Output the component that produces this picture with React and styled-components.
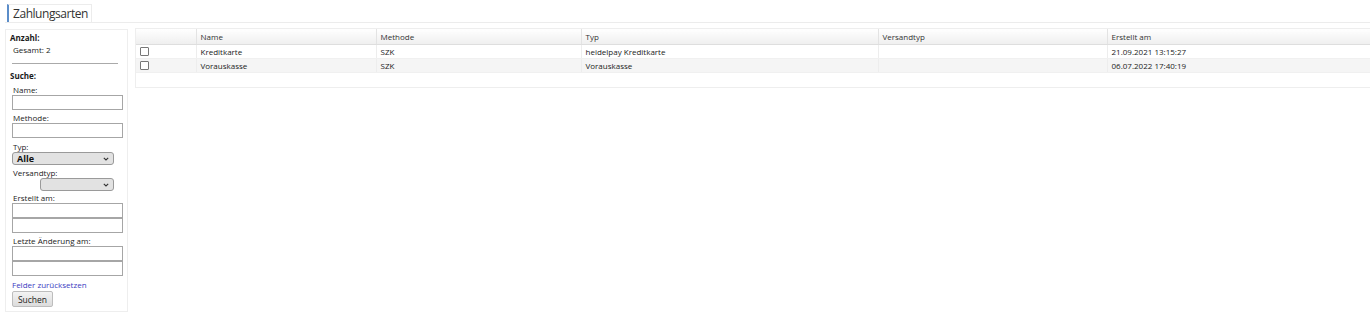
import React from 'react';
import styled, { createGlobalStyle } from 'styled-components';

const GlobalStyle = createGlobalStyle`
  html, body {
    margin: 0;
    padding: 0;
    background: #ffffff;
  }
  body {
    font-family: 'Open Sans', 'Noto Sans', sans-serif;
    font-size: 8px;
    color: #222222;
  }
`;

const Page = styled.div`
  width: 1370px;
  height: 313px;
  overflow: hidden;
  padding: 4px 0 0 5px;
  box-sizing: border-box;
`;

const TabBar = styled.div`
  display: flex;
  border-bottom: 1px solid #ececec;
  height: 18px;
`;

const Tab = styled.div`
  display: flex;
  align-items: center;
  height: 18px;
  margin-left: 2px;
  padding: 0 3px 0 4px;
  border: 1px solid #ececec;
  border-left: 2px solid #5b8dc9;
  border-bottom: none;
  font-size: 12px;
  letter-spacing: -0.45px;
  color: #333333;
  box-sizing: border-box;
`;

const Body = styled.div`
  display: flex;
  gap: 7px;
  margin-top: 6px;
  align-items: flex-start;
`;

const Sidebar = styled.aside`
  width: 123px;
  height: 283px;
  box-sizing: border-box;
  border: 1px solid #eeeeee;
  padding: 3px 4px 0 4px;
`;

const Heading = styled.div`
  font-weight: 700;
  color: #1a1a1a;
  margin-top: ${(p) => p.$top || 0}px;
  line-height: 10px;
`;

const Value = styled.div`
  padding-left: 3px;
  margin-top: 2px;
  line-height: 10px;
`;

const Rule = styled.hr`
  border: none;
  border-top: 1px solid #aaaaaa;
  margin: 8px 5px 0 2px;
  height: 0;
`;

const Label = styled.div`
  padding-left: 3px;
  margin-top: ${(p) => p.$top || 0}px;
  line-height: 10px;
`;

const TextInput = styled.input`
  display: block;
  width: 111px;
  height: 15px;
  margin: 0 0 0 2px;
  box-sizing: border-box;
  border: 1px solid #a6a6a6;
  background: #ffffff;
  padding: 0;
`;

const SelectBox = styled.div`
  display: flex;
  align-items: center;
  box-sizing: border-box;
  width: ${(p) => p.$w}px;
  height: 13px;
  margin-left: ${(p) => p.$left}px;
  border: 1px solid #9a9a9a;
  border-radius: 3px;
  background: #e2e2e2;
  padding: 0 4px 0 4px;
  font-weight: 700;
  font-size: 9px;
  color: #111111;
`;

const Chevron = styled.svg`
  width: 6px;
  height: 4px;
  margin-left: auto;
`;

const ResetLink = styled.a`
  display: block;
  color: #3b3bbf;
  text-decoration: none;
  padding-left: 2px;
  margin-top: 4px;
  line-height: 10px;
`;

const Button = styled.button`
  display: block;
  width: 41px;
  height: 16px;
  margin-left: 2px;
  margin-top: 1px;
  padding: 0;
  border: 1px solid #bdbdbd;
  border-radius: 2px;
  background: linear-gradient(#f3f3f3, #dcdcdc);
  font-family: inherit;
  font-size: 8.5px;
  color: #222222;
`;

const Grid = styled.div`
  flex: 1;
  height: 60px;
  border: 1px solid #eeeeee;
  border-right: none;
  box-sizing: border-box;
  margin-top: -1px;
`;

const Table = styled.table`
  width: 100%;
  border-collapse: collapse;
  table-layout: fixed;
`;

const Th = styled.th`
  text-align: left;
  font-weight: 400;
  height: 15px;
  padding: 0 0 0 4px;
  background: linear-gradient(#ffffff, #efefef);
  border-bottom: 1px solid #dedede;
  border-left: ${(p) => (p.$first ? 'none' : '1px solid #e3e3e3')};
  color: #333333;
  white-space: nowrap;
`;

const Tr = styled.tr`
  background: ${(p) => (p.$alt ? '#f5f5f5' : '#ffffff')};
`;

const Td = styled.td`
  height: 13px;
  padding: 0 0 0 4px;
  border-bottom: 1px solid #f0f0f0;
  border-left: ${(p) => (p.$first ? 'none' : '1px solid #ededed')};
  white-space: nowrap;
  color: #222222;
`;

const Check = styled.span`
  display: block;
  width: 7px;
  height: 7px;
  border: 1px solid #777777;
  border-radius: 1px;
  background: #ffffff;
`;

const columns = [
  { key: 'check', title: '', width: 60 },
  { key: 'name', title: 'Name', width: 180 },
  { key: 'methode', title: 'Methode', width: 205 },
  { key: 'typ', title: 'Typ', width: 297 },
  { key: 'versand', title: 'Versandtyp', width: 229 },
  { key: 'erstellt', title: 'Erstellt am' },
];

const rows = [
  { name: 'Kreditkarte', methode: 'SZK', typ: 'heidelpay Kreditkarte', versand: '', erstellt: '21.09.2021 13:15:27' },
  { name: 'Vorauskasse', methode: 'SZK', typ: 'Vorauskasse', versand: '', erstellt: '06.07.2022 17:40:19' },
];

function Select({ width, left, value }) {
  return (
    <SelectBox $w={width} $left={left}>
      {value}
      <Chevron viewBox="0 0 6 4">
        <path d="M0.8 0.8 L3 3 L5.2 0.8" fill="none" stroke="#333" strokeWidth="1.1" />
      </Chevron>
    </SelectBox>
  );
}

export default function App() {
  return (
    <>
      <GlobalStyle />
      <Page>
        <TabBar>
          <Tab>Zahlungsarten</Tab>
        </TabBar>
        <Body>
          <Sidebar>
            <Heading>Anzahl:</Heading>
            <Value>Gesamt: 2</Value>
            <Rule />
            <Heading $top={7}>Suche:</Heading>
            <Label $top={4}>Name:</Label>
            <TextInput />
            <Label $top={3}>Methode:</Label>
            <TextInput />
            <Label $top={4}>Typ:</Label>
            <Select width={102} left={2} value="Alle" />
            <Label $top={3}>Versandtyp:</Label>
            <Select width={74} left={30} value="" />
            <Label $top={2}>Erstellt am:</Label>
            <TextInput />
            <TextInput />
            <Label $top={3}>Letzte Änderung am:</Label>
            <TextInput />
            <TextInput />
            <ResetLink href="#">Felder zurücksetzen</ResetLink>
            <Button>Suchen</Button>
          </Sidebar>
          <Grid>
            <Table>
              <colgroup>
                {columns.map((c) => (
                  <col key={c.key} style={c.width ? { width: c.width } : undefined} />
                ))}
              </colgroup>
              <thead>
                <tr>
                  {columns.map((c, i) => (
                    <Th key={c.key} $first={i === 0}>{c.title}</Th>
                  ))}
                </tr>
              </thead>
              <tbody>
                {rows.map((r, i) => (
                  <Tr key={r.name} $alt={i % 2 === 1}>
                    <Td $first><Check /></Td>
                    <Td>{r.name}</Td>
                    <Td>{r.methode}</Td>
                    <Td>{r.typ}</Td>
                    <Td>{r.versand}</Td>
                    <Td>{r.erstellt}</Td>
                  </Tr>
                ))}
              </tbody>
            </Table>
          </Grid>
        </Body>
      </Page>
    </>
  );
}
